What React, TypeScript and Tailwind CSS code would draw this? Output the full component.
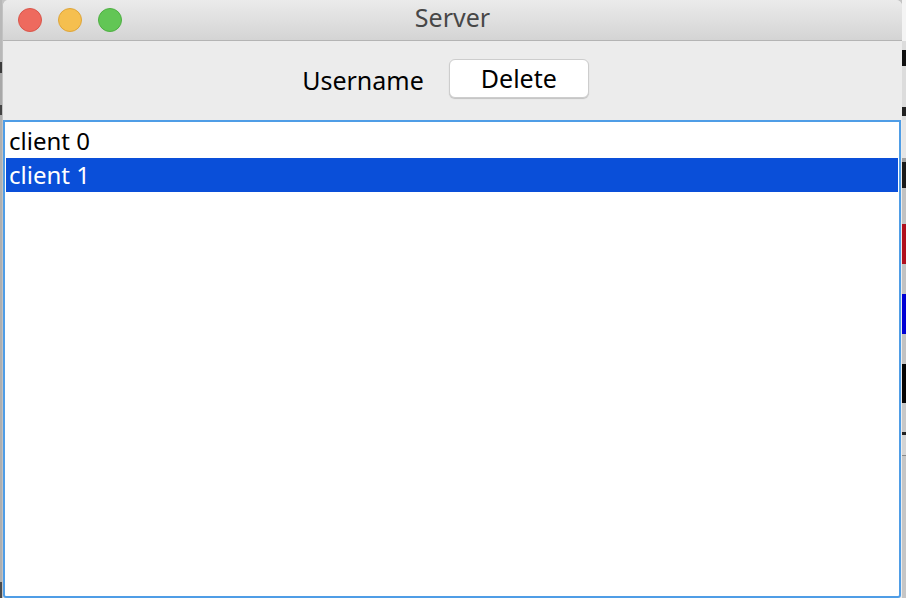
import React from 'react';

const font = { fontFamily: '"Noto Sans", "Open Sans", sans-serif' };

// slivers of other windows peeking out behind the Server window
function LeftSliver() {
  return (
    <div className="w-[2px] h-full flex flex-col bg-[#9a9a9a]">
      <div className="h-[62px] bg-[#b8b8b8]" />
      <div className="h-[11px] bg-[#3c3c3c]" />
      <div className="h-[32px] bg-[#a8a8a8]" />
      <div className="h-[10px] bg-[#444444]" />
      <div className="flex-1 bg-[#b0b0b0]" />
      <div className="h-[16px] bg-[#4a4a4a]" />
    </div>
  );
}

function RightSliver() {
  return (
    <div className="w-[4px] h-full flex flex-col bg-[#c4c4c4]">
      <div className="h-[41px] bg-[#f4f4f4]" />
      <div className="h-[9px] bg-[#dcdcdc]" />
      <div className="h-[16px] bg-[#111111]" />
      <div className="h-[41px] bg-[#dcdcdc]" />
      <div className="h-[9px] bg-[#222222]" />
      <div className="h-[4px] bg-[#dcdcdc]" />
      <div className="h-[38px] bg-[#e6e6e6]" />
      <div className="h-[4px] bg-[#a0a0a0]" />
      <div className="h-[26px] bg-[#1a1a1a]" />
      <div className="h-[36px] bg-[#c2c2c2]" />
      <div className="h-[40px] bg-[#b0101e]" />
      <div className="h-[30px] bg-[#c2c2c2]" />
      <div className="h-[40px] bg-[#0000d4]" />
      <div className="h-[30px] bg-[#c2c2c2]" />
      <div className="h-[39px] bg-[#050505]" />
      <div className="h-[29px] bg-[#c8c8c8]" />
      <div className="h-[3px] bg-[#222222]" />
      <div className="h-[20px] bg-[#d4d4d4]" />
      <div className="h-[1px] bg-[#8a8a8a]" />
      <div className="flex-1 bg-[#c6c6c6]" />
    </div>
  );
}

const clients = ['client 0', 'client 1'];

export default function App() {
  const selected = 1;

  return (
    <div className="w-[906px] h-[598px] flex bg-[#c4c4c4] overflow-hidden" style={font}>
      <LeftSliver />

      <div className="w-[900px] h-full flex flex-col rounded-t-[6px] overflow-hidden border-l border-[#c2c2c2] bg-[#ececec]">
        {/* Title bar */}
        <div className="relative h-[41px] shrink-0 flex items-center justify-center pb-[4px] bg-gradient-to-b from-[#ebebeb] to-[#d4d4d4] border-b border-[#b4b4b4]">
          <div className="absolute left-[15px] top-[8px] flex gap-[16px]">
            <span className="w-[24px] h-[24px] rounded-full bg-[#ee6a5e] border border-[#d9564b]" />
            <span className="w-[24px] h-[24px] rounded-full bg-[#f5bf4f] border border-[#dea53a]" />
            <span className="w-[24px] h-[24px] rounded-full bg-[#62c655] border border-[#4eaf42]" />
          </div>
          <span className="text-[25px] text-[#474747]">Server</span>
        </div>

        {/* Toolbar */}
        <div className="h-[79px] shrink-0 flex items-center justify-center gap-[25px] pr-[14px] pb-[4px]">
          <span className="text-[25px] leading-[34px] text-black mt-[2px]">Username</span>
          <button className="w-[140px] h-[39px] flex items-center justify-center rounded-[6px] bg-white border border-[#cdcdcd] shadow-[0_1px_1px_rgba(0,0,0,0.18)] text-[25px] text-black">
            Delete
          </button>
        </div>

        {/* Client list */}
        <div className="flex-1 mr-[1px] rounded-b-[3px] border-2 border-[#4f9de6] bg-white pt-[2px] px-[1px]">
          {clients.map((c, i) => (
            <div
              key={c}
              className={
                i === selected
                  ? 'h-[34px] pl-[3px] text-[24px] leading-[34px] bg-[#0a4fd9] text-white'
                  : 'h-[34px] pl-[3px] text-[24px] leading-[34px] text-black'
              }
            >
              {c}
            </div>
          ))}
        </div>
      </div>

      <RightSliver />
    </div>
  );
}
